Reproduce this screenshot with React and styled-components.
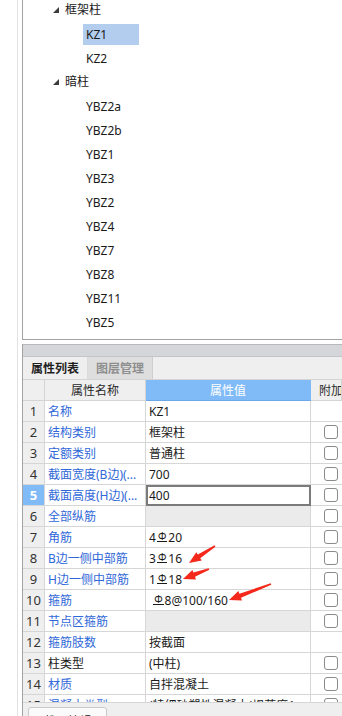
import styled, { createGlobalStyle } from 'styled-components'

const GlobalStyle = createGlobalStyle`
  body {
    margin: 0;
    background: #ffffff;
    font-family: "Noto Sans", "Noto Sans CJK SC", sans-serif;
  }
`;

const tree = [
  { group: '框架柱', items: ['KZ1', 'KZ2'] },
  { group: '暗柱', items: ['YBZ2a', 'YBZ2b', 'YBZ1', 'YBZ3', 'YBZ2', 'YBZ4', 'YBZ7', 'YBZ8', 'YBZ11', 'YBZ5'] },
];

const R = 'Φ';
const rows = [
  { name: '名称', value: 'KZ1', check: false },
  { name: '结构类别', value: '框架柱', check: true },
  { name: '定额类别', value: '普通柱', check: true },
  { name: '截面宽度(B边)(...', value: '700', check: true },
  { name: '截面高度(H边)(...', value: '400', check: true, editing: true },
  { name: '全部纵筋', value: '', check: true, disabled: true },
  { name: '角筋', value: ['4', R, '20'], check: true },
  { name: 'B边一侧中部筋', value: ['3', R, '16'], check: true },
  { name: 'H边一侧中部筋', value: ['1', R, '18'], check: true },
  { name: '箍筋', value: [' ', R, '8@100/160'], check: true },
  { name: '节点区箍筋', value: '', check: true, disabled: true },
  { name: '箍筋肢数', value: '按截面', check: false },
  { name: '柱类型', value: '(中柱)', check: true, plain: true },
  { name: '材质', value: '自拌混凝土', check: true },
  { name: '混凝土类型', value: '(特细砂塑性混凝土(坍落度1...', check: true },
];

// tapered red arrow, tail -> head
function arrow(tx, ty, hx, hy) {
  const dx = hx - tx;
  const dy = hy - ty;
  const len = Math.hypot(dx, dy);
  const ux = dx / len;
  const uy = dy / len;
  const px = -uy;
  const py = ux;
  const headLen = 12;
  const bx = hx - ux * headLen;
  const by = hy - uy * headLen;
  const pts = [
    [tx + px * 0.8, ty + py * 0.8],
    [bx + px * 2.2, by + py * 2.2],
    [bx + px * 5, by + py * 5],
    [hx, hy],
    [bx - px * 5, by - py * 5],
    [bx - px * 2.2, by - py * 2.2],
    [tx - px * 0.8, ty - py * 0.8],
  ];
  return pts.map((p) => p.map((v) => v.toFixed(1)).join(',')).join(' ');
}

function Value({ value }) {
  if (!Array.isArray(value)) return value;
  return value.map((part, i) =>
    part === R ? <Rebar key={i}>{R}</Rebar> : <span key={i}>{part}</span>
  );
}

export default function App() {
  return (
    <>
      <GlobalStyle />
      <Page>
        <Gutter />
        <Spacer />
        <Main>
          <TreePanel>
            <TreeList>
              {tree.map((g) => (
                <div key={g.group}>
                  <GroupRow>
                    <svg width="6" height="6" viewBox="0 0 6 6">
                      <polygon points="6,0 6,6 0,6" fill="#3c3c3c" />
                    </svg>
                    <span>{g.group}</span>
                  </GroupRow>
                  {g.items.map((it) => (
                    <LeafRow key={it}>
                      <LeafLabel $selected={it === 'KZ1'}>{it}</LeafLabel>
                    </LeafRow>
                  ))}
                </div>
              ))}
            </TreeList>
          </TreePanel>

          <PropPanel>
            <TitleBand />
            <TabBar>
              <Tab $active>属性列表</Tab>
              <Tab>图层管理</Tab>
            </TabBar>
            <HeaderRow>
              <HeadCell />
              <HeadCell $center>属性名称</HeadCell>
              <HeadCell $center $blue>属性值</HeadCell>
              <HeadCell>附加</HeadCell>
            </HeaderRow>
            <Body>
              {rows.map((r, i) => (
                <Row key={i}>
                  <NumCell $active={r.editing}>{i + 1}</NumCell>
                  <NameCell $plain={r.plain}>{r.name}</NameCell>
                  <ValueCell $disabled={r.disabled} $editing={r.editing}>
                    <Value value={r.value} />
                  </ValueCell>
                  <AttachCell>{r.check && <CheckBox />}</AttachCell>
                </Row>
              ))}
            </Body>
            <BottomBar>
              <BottomTab>截面编辑</BottomTab>
            </BottomBar>
          </PropPanel>
        </Main>

        <Overlay width="342" height="716" viewBox="0 0 342 716">
          <polygon points={arrow(215, 546, 189, 563)} fill="#f4291c" />
          <polygon points={arrow(209, 569, 183, 579)} fill="#f4291c" />
          <polygon points={arrow(271, 584, 229, 600)} fill="#f4291c" />
        </Overlay>
      </Page>
    </>
  );
}

const Page = styled.div`
  position: relative;
  display: flex;
  width: 342px;
  height: 716px;
  overflow: hidden;
  background: #ffffff;
`;

const Gutter = styled.div`
  width: 18px;
  flex: none;
  box-sizing: border-box;
  border-right: 1px solid #e2e2e2;
`;

const Spacer = styled.div`
  width: 4px;
  flex: none;
`;

const Main = styled.div`
  flex: 1;
  display: flex;
  flex-direction: column;
  min-width: 0;
`;

const TreePanel = styled.div`
  height: 340px;
  flex: none;
  box-sizing: border-box;
  border-left: 1px solid #a3a3a3;
  border-bottom: 1px solid #a3a3a3;
  overflow: hidden;
`;

const TreeList = styled.div`
  margin-top: -2px;
  font-size: 12px;
  color: #1a1a1a;
`;

const GroupRow = styled.div`
  height: 24px;
  display: flex;
  align-items: center;
  gap: 6px;
  padding-left: 30px;
  line-height: 24px;
`;

const LeafRow = styled.div`
  height: 24px;
  display: flex;
  align-items: center;
  padding-left: 60px;
`;

const LeafLabel = styled.span`
  display: block;
  width: 56px;
  height: 21px;
  line-height: 21px;
  padding-left: 3px;
  box-sizing: border-box;
  background: ${(p) => (p.$selected ? '#b3cdee' : 'transparent')};
`;

const PropPanel = styled.div`
  flex: 1;
  margin-top: 4px;
  display: flex;
  flex-direction: column;
  border-left: 1px solid #a3a3a3;
  border-top: 1px solid #b9b9b9;
  min-height: 0;
  font-size: 12px;
`;

const TitleBand = styled.div`
  height: 11px;
  flex: none;
  background: #d5d6da;
  border-bottom: 1px solid #c4c5c9;
`;

const TabBar = styled.div`
  height: 22px;
  flex: none;
  display: flex;
  background: #efefef;
`;

const Tab = styled.div`
  width: 65px;
  box-sizing: border-box;
  display: flex;
  align-items: center;
  justify-content: center;
  font-weight: 700;
  color: ${(p) => (p.$active ? '#1f1f1f' : '#8e8e8e')};
  background: ${(p) => (p.$active ? '#efefef' : '#dedede')};
  border-right: 1px solid ${(p) => (p.$active ? '#dadada' : '#cfcfcf')};
`;

const HeaderRow = styled.div`
  height: 22px;
  flex: none;
  display: grid;
  grid-template-columns: 22px 101px 165px 1fr;
  border-top: 1px solid #d4d4d4;
  box-sizing: border-box;
`;

const HeadCell = styled.div`
  box-sizing: border-box;
  display: flex;
  align-items: center;
  justify-content: ${(p) => (p.$center ? 'center' : 'flex-start')};
  padding-left: ${(p) => (p.$center ? '0' : '8px')};
  background: ${(p) => (p.$blue ? '#80bbf7' : '#efefef')};
  color: ${(p) => (p.$blue ? '#ffffff' : '#2a2a2a')};
  border-right: 1px solid ${(p) => (p.$blue ? '#80bbf7' : '#d4d4d4')};
  border-bottom: 1px solid ${(p) => (p.$blue ? '#6aa8ea' : '#d4d4d4')};
  white-space: nowrap;
  overflow: hidden;
`;

const Body = styled.div`
  height: 301px;
  flex: none;
  overflow: hidden;
`;

const Row = styled.div`
  height: 21px;
  display: grid;
  grid-template-columns: 22px 101px 165px 1fr;
`;

const Cell = styled.div`
  box-sizing: border-box;
  display: flex;
  align-items: center;
  border-right: 1px solid #d6d6d6;
  border-bottom: 1px solid #d6d6d6;
  white-space: nowrap;
  overflow: hidden;
`;

const NumCell = styled(Cell)`
  justify-content: center;
  font-size: 13px;
  background: ${(p) => (p.$active ? '#80bbf7' : '#efefef')};
  color: ${(p) => (p.$active ? '#ffffff' : '#333333')};
  font-weight: ${(p) => (p.$active ? 700 : 400)};
`;

const NameCell = styled(Cell)`
  padding-left: 3px;
  color: ${(p) => (p.$plain ? '#1a1a1a' : '#2f68d8')};
  background: #ffffff;
`;

const ValueCell = styled(Cell)`
  padding-left: 3px;
  color: #1a1a1a;
  white-space: pre;
  background: ${(p) => (p.$disabled ? '#ebebeb' : '#ffffff')};
  ${(p) => p.$editing && `
    border: 2px solid #7b7b7b;
    padding-left: 1px;
  `}
`;

const AttachCell = styled(Cell)`
  border-right: none;
  padding-left: 13px;
`;

const CheckBox = styled.span`
  display: block;
  width: 14px;
  height: 14px;
  box-sizing: border-box;
  border: 1px solid #8a8a8a;
  border-radius: 3px;
  background: #ffffff;
`;

const Rebar = styled.span`
  display: inline-block;
  font-size: 10px;
  line-height: 9px;
  height: 9px;
  margin: 0 1px;
  padding: 0 1px;
  border-bottom: 1px solid #1a1a1a;
  vertical-align: 2px;
`;

const BottomBar = styled.div`
  flex: 1;
  background: #efefef;
  border-top: 1px solid #d6d6d6;
  padding: 4px 0 0 5px;
  overflow: hidden;
`;

const BottomTab = styled.div`
  width: 79px;
  height: 22px;
  box-sizing: border-box;
  border: 1px solid #c9c9c9;
  border-radius: 3px 3px 0 0;
  background: #fafafa;
  text-align: center;
  padding-top: 4px;
  color: #1a1a1a;
`;

const Overlay = styled.svg`
  position: absolute;
  left: 0;
  top: 0;
  pointer-events: none;
`;
